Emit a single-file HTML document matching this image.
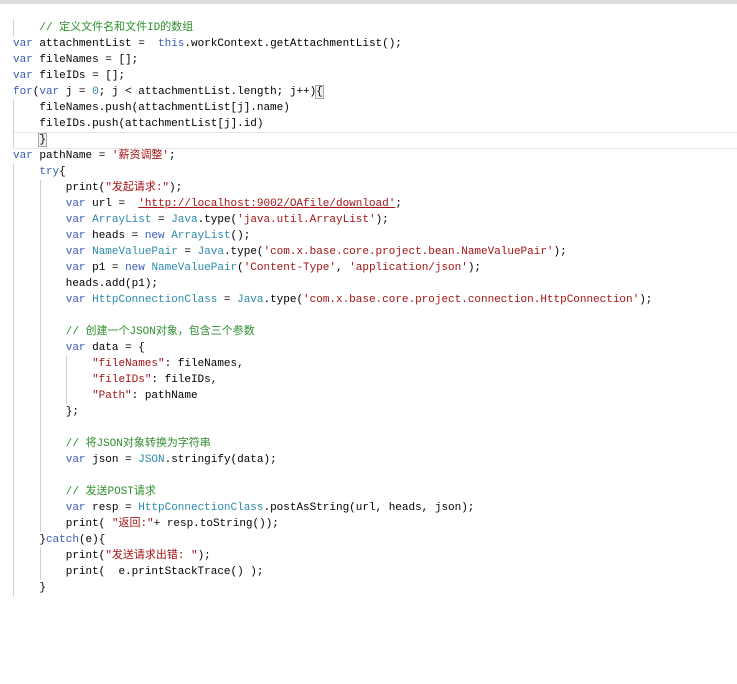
<!DOCTYPE html>
<html><head><meta charset="utf-8"><style>
html,body{margin:0;padding:0;background:#fff;width:737px;height:684px;overflow:hidden;position:relative}
.top{position:absolute;left:0;top:0;width:737px;height:4px;background:#dcdcdc}
pre{position:absolute;left:13px;top:20px;margin:0;font-family:"Liberation Mono","Noto Sans CJK SC",monospace;font-size:11px;line-height:16px;color:#000;letter-spacing:-0.01px}
.k{color:#3a5bb8}.t{color:#2b8bab}.s{color:#a31515}.c{color:#2f8f2f}
.g{position:absolute;width:1px;background:#d0d0d0}
.cur{position:absolute;left:13px;top:132px;width:724px;height:15px;border-top:1px solid #e6e6e6;border-bottom:1px solid #e6e6e6}
.u{text-decoration:underline;text-decoration-color:#a31515}
.b{outline:1px solid #aaa;background:#eef2ee}
</style></head><body>
<div class="top"></div>
<div class="cur"></div>
<div class="g" style="left:13px;top:20px;height:16px"></div>
<div class="g" style="left:13px;top:100px;height:48px"></div>
<div class="g" style="left:13px;top:164px;height:432px"></div>
<div class="g" style="left:40px;top:180px;height:352px"></div>
<div class="g" style="left:40px;top:548px;height:32px"></div>
<div class="g" style="left:66px;top:356px;height:48px"></div>
<pre>    <span class="c">// 定义文件名和文件ID的数组</span>
<span class="k">var</span> attachmentList =  <span class="k">this</span>.workContext.getAttachmentList();
<span class="k">var</span> fileNames = [];
<span class="k">var</span> fileIDs = [];
<span class="k">for</span>(<span class="k">var</span> j = <span class="t">0</span>; j &lt; attachmentList.length; j++)<span class="b">{</span>
    fileNames.push(attachmentList[j].name)
    fileIDs.push(attachmentList[j].id)
    <span class="b">}</span>
<span class="k">var</span> pathName = <span class="s">'薪资调整'</span>;
    <span class="k">try</span>{
        print(<span class="s">"发起请求:"</span>);
        <span class="k">var</span> url =  <span class="s u">'http://localhost:9002/OAfile/download'</span>;
        <span class="k">var</span> <span class="t">ArrayList</span> = <span class="t">Java</span>.type(<span class="s">'java.util.ArrayList'</span>);
        <span class="k">var</span> heads = <span class="k">new</span> <span class="t">ArrayList</span>();
        <span class="k">var</span> <span class="t">NameValuePair</span> = <span class="t">Java</span>.type(<span class="s">'com.x.base.core.project.bean.NameValuePair'</span>);
        <span class="k">var</span> p1 = <span class="k">new</span> <span class="t">NameValuePair</span>(<span class="s">'Content-Type'</span>, <span class="s">'application/json'</span>);
        heads.add(p1);
        <span class="k">var</span> <span class="t">HttpConnectionClass</span> = <span class="t">Java</span>.type(<span class="s">'com.x.base.core.project.connection.HttpConnection'</span>);

        <span class="c">// 创建一个JSON对象，包含三个参数</span>
        <span class="k">var</span> data = {
            <span class="s">"fileNames"</span>: fileNames,
            <span class="s">"fileIDs"</span>: fileIDs,
            <span class="s">"Path"</span>: pathName
        };

        <span class="c">// 将JSON对象转换为字符串</span>
        <span class="k">var</span> json = <span class="t">JSON</span>.stringify(data);

        <span class="c">// 发送POST请求</span>
        <span class="k">var</span> resp = <span class="t">HttpConnectionClass</span>.postAsString(url, heads, json);
        print( <span class="s">"返回:"</span>+ resp.toString());
    }<span class="k">catch</span>(e){
        print(<span class="s">"发送请求出错: "</span>);
        print(  e.printStackTrace() );
    }</pre>
</body></html>
